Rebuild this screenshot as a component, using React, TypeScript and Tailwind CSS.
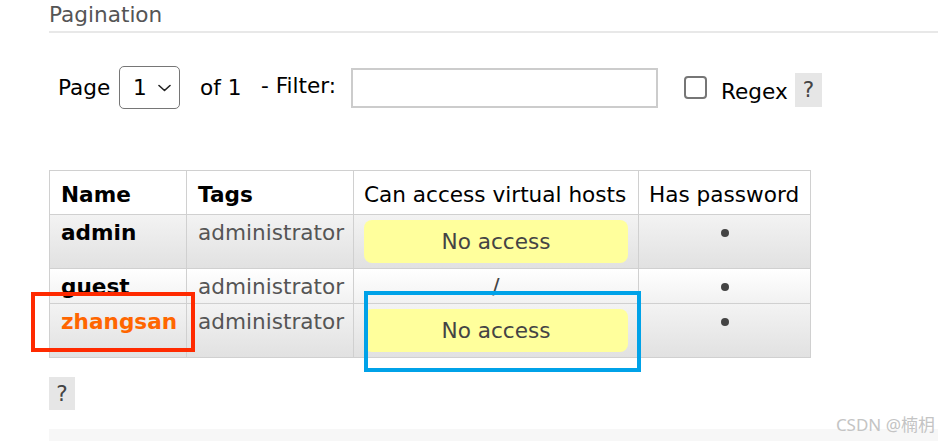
import React from "react";

type User = {
  name: string;
  tags: string;
  access: string | null;
  height: string;
  stripe: "odd" | "even";
  highlight?: boolean;
};

const users: User[] = [
  { name: "admin", tags: "administrator", access: null, height: "h-[54px]", stripe: "odd" },
  { name: "guest", tags: "administrator", access: "/", height: "h-[35px]", stripe: "even" },
  { name: "zhangsan", tags: "administrator", access: null, height: "h-[54px]", stripe: "odd", highlight: true },
];

function HelpBox({ className = "" }: { className?: string }) {
  return (
    <span
      className={`flex items-center justify-center bg-[#e6e6e6] text-[#444] leading-[26px] ${className}`}
    >
      ?
    </span>
  );
}

function PageSelect() {
  return (
    <div className="flex h-[43px] w-[61px] items-center rounded-[5px] border-[1.5px] border-[#767676] bg-white pl-[13px]">
      <span className="leading-[26px] text-black">1</span>
      <svg className="ml-[11px]" width="13" height="8" viewBox="0 0 13 8" fill="none">
        <path d="M1 1.5 L6.5 6.5 L12 1.5" stroke="#222" strokeWidth="1.6" strokeLinecap="round" strokeLinejoin="round" />
      </svg>
    </div>
  );
}

function NoAccess() {
  return (
    <div className="flex h-[43px] items-center justify-center rounded-[8px] bg-[#ffff9c] leading-[26px] text-[#444]">
      No access
    </div>
  );
}

export default function App() {
  return (
    <div className="relative h-[441px] w-[938px] overflow-hidden bg-white font-['DejaVu_Sans',Verdana,sans-serif] text-[21.6px] text-black">
      <div className="pl-[49px]">
        <h2 className="border-b-2 border-[#e8e8e8] pt-[2px] pb-[3px] text-[21.6px] font-normal leading-[26px] text-[#555]">
          Pagination
        </h2>

        <div className="mt-[33px] flex h-[43px] items-center">
          <span className="ml-[9px] w-[61px] leading-[26px]">Page</span>
          <PageSelect />
          <span className="ml-[20px] w-[61px] leading-[26px]">of 1</span>
          <span className="mb-[4px] w-[90px] leading-[26px]">- Filter:</span>
          <input
            type="text"
            className="h-[40px] w-[307px] border-2 border-[#cccccc] bg-white outline-none"
          />
          <span className="ml-[26px] h-[23px] w-[23px] rounded-[4px] border-2 border-[#767676] bg-white" />
          <span className="mt-[8px] ml-[14px] w-[74px] leading-[26px]">Regex</span>
          <HelpBox className="mt-[5px] h-[34px] w-[27px]" />
        </div>

        <table className="mt-[61px] w-[761px] table-fixed border-collapse border border-[#cccccc]">
          <thead>
            <tr className="h-[44px] bg-white">
              <th className="w-[137px] border border-[#d0d0d0] px-[11px] pt-[4px] text-left font-bold leading-[26px]">Name</th>
              <th className="w-[167px] border border-[#d0d0d0] px-[11px] pt-[4px] text-left font-bold leading-[26px]">Tags</th>
              <th className="w-[285px] border border-[#d0d0d0] px-[10px] pt-[4px] text-left font-normal leading-[26px] whitespace-nowrap">
                Can access virtual hosts
              </th>
              <th className="w-[172px] border border-[#d0d0d0] px-[10px] pt-[4px] text-left font-normal leading-[26px] whitespace-nowrap">
                Has password
              </th>
            </tr>
          </thead>
          <tbody>
            {users.map((u) => (
              <tr
                key={u.name}
                className={`${u.height} ${
                  u.stripe === "odd"
                    ? "bg-gradient-to-b from-[#f3f3f3] to-[#e1e1e1]"
                    : "bg-gradient-to-b from-[#ffffff] to-[#f1f1f1]"
                }`}
              >
                <td className={`border border-[#d0d0d0] px-[11px] pt-[5px] align-top font-bold leading-[26px] ${u.highlight ? "text-[#ff6600]" : "text-black"}`}>
                  {u.name}
                </td>
                <td className="border border-[#d0d0d0] px-[11px] pt-[5px] align-top leading-[26px] text-[#555] whitespace-nowrap">{u.tags}</td>
                <td className="border border-[#d0d0d0] px-[10px] pt-[5px] align-top leading-[26px] text-center text-[#444]">
                  {u.access ?? <NoAccess />}
                </td>
                <td className="border border-[#d0d0d0] px-[11px] pt-[5px] align-top text-center leading-[26px]">
                  <span className="mt-[9px] inline-block h-[8px] w-[8px] rounded-full bg-[#444] align-top" />
                </td>
              </tr>
            ))}
          </tbody>
        </table>

        <HelpBox className="mt-[19px] h-[33px] w-[26px]" />

        <div className="mt-[19px] h-[20px] bg-[#f7f7f7]" />
      </div>

      {/* annotation boxes drawn over the screenshot */}
      <div className="absolute top-[292px] left-[31px] h-[60px] w-[164px] border-4 border-[#ff2a00]" />
      <div className="absolute top-[291px] left-[364px] h-[81px] w-[277px] border-4 border-[#00a2e8]" />

      <span className="absolute top-[413px] right-[3px] font-['Noto_Sans','Noto_Sans_CJK_SC',sans-serif] text-[17px] leading-[24px] text-[#c4c4c4]">
        CSDN @楠枂
      </span>
    </div>
  );
}
